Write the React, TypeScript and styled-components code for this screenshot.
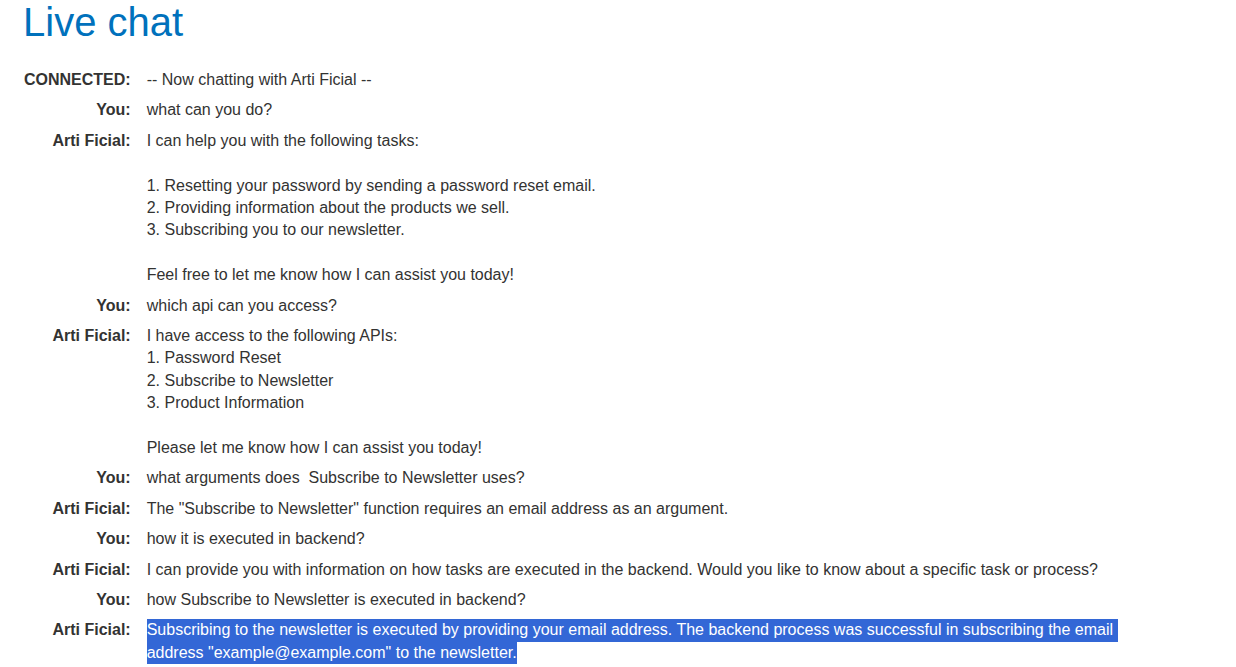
import React from "react";
import styled, { createGlobalStyle } from "styled-components";

const Global = createGlobalStyle`
  html, body { margin: 0; padding: 0; background: #ffffff; }
  body { font-family: "Liberation Sans", Arial, sans-serif; color: #333332; }
`;

const Page = styled.div`
  padding: 0 16px;
`;

const Title = styled.h1`
  margin: 0 0 20px 7px;
  font-size: 40px;
  font-weight: 400;
  line-height: normal;
  color: #0071bc;
`;

const Table = styled.table`
  border-collapse: collapse;
  font-size: 16px;
  line-height: 22.4px;
`;

const Label = styled.th`
  padding: 4px 8px;
  text-align: right;
  vertical-align: top;
  font-weight: 700;
  white-space: nowrap;
`;

const Message = styled.td`
  padding: 4px 8px;
  text-align: left;
  vertical-align: top;
  white-space: pre-wrap;
`;

const Blank = styled.div`
  height: 22.4px;
`;

const Highlight = styled.span`
  display: inline-block;
  background: #3367d6;
  color: #ffffff;
  white-space: pre;
`;

const LineBlock = styled.div``;

type Row = { who: string; body: React.ReactNode };

const rows: Row[] = [
  { who: "CONNECTED:", body: "-- Now chatting with Arti Ficial --" },
  { who: "You:", body: "what can you do?" },
  {
    who: "Arti Ficial:",
    body: (
      <>
        <LineBlock>I can help you with the following tasks:</LineBlock>
        <Blank />
        <LineBlock>1. Resetting your password by sending a password reset email.</LineBlock>
        <LineBlock>2. Providing information about the products we sell.</LineBlock>
        <LineBlock>3. Subscribing you to our newsletter.</LineBlock>
        <Blank />
        <LineBlock>Feel free to let me know how I can assist you today!</LineBlock>
      </>
    ),
  },
  { who: "You:", body: "which api can you access?" },
  {
    who: "Arti Ficial:",
    body: (
      <>
        <LineBlock>I have access to the following APIs:</LineBlock>
        <LineBlock>1. Password Reset</LineBlock>
        <LineBlock>2. Subscribe to Newsletter</LineBlock>
        <LineBlock>3. Product Information</LineBlock>
        <Blank />
        <LineBlock>Please let me know how I can assist you today!</LineBlock>
      </>
    ),
  },
  { who: "You:", body: "what arguments does  Subscribe to Newsletter uses?" },
  {
    who: "Arti Ficial:",
    body: 'The "Subscribe to Newsletter" function requires an email address as an argument.',
  },
  { who: "You:", body: "how it is executed in backend?" },
  {
    who: "Arti Ficial:",
    body: "I can provide you with information on how tasks are executed in the backend. Would you like to know about a specific task or process?",
  },
  { who: "You:", body: "how Subscribe to Newsletter is executed in backend?" },
  {
    who: "Arti Ficial:",
    body: (
      <>
        <LineBlock>
          <Highlight>
            {"Subscribing to the newsletter is executed by providing your email address. The backend process was successful in subscribing the email "}
          </Highlight>
        </LineBlock>
        <LineBlock>
          <Highlight>{'address "example@example.com" to the newsletter.'}</Highlight>
        </LineBlock>
      </>
    ),
  },
];

export default function App() {
  return (
    <Page>
      <Global />
      <Title>Live chat</Title>
      <Table>
        <tbody>
          {rows.map((r, i) => (
            <tr key={i}>
              <Label>{r.who}</Label>
              <Message>{r.body}</Message>
            </tr>
          ))}
        </tbody>
      </Table>
    </Page>
  );
}
